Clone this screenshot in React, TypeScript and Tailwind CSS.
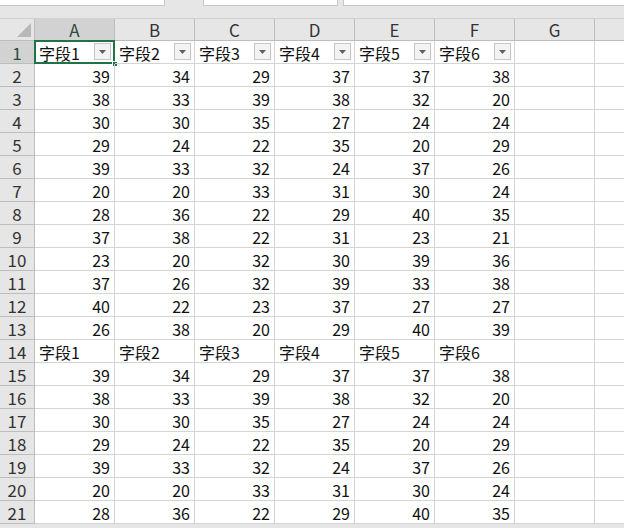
import React from 'react'

const cols = ['A', 'B', 'C', 'D', 'E', 'F', 'G']
const fields = ['字段1', '字段2', '字段3', '字段4', '字段5', '字段6']

const block = [
  [39, 34, 29, 37, 37, 38],
  [38, 33, 39, 38, 32, 20],
  [30, 30, 35, 27, 24, 24],
  [29, 24, 22, 35, 20, 29],
  [39, 33, 32, 24, 37, 26],
  [20, 20, 33, 31, 30, 24],
  [28, 36, 22, 29, 40, 35],
  [37, 38, 22, 31, 23, 21],
  [23, 20, 32, 30, 39, 36],
  [37, 26, 32, 39, 33, 38],
  [40, 22, 23, 37, 27, 27],
  [26, 38, 20, 29, 40, 39],
]

type Row = { kind: 'filter' | 'head' | 'data'; values?: number[] }

const rows: Row[] = [
  { kind: 'filter' },
  ...block.map((values) => ({ kind: 'data' as const, values })),
  { kind: 'head' },
  ...block.slice(0, 7).map((values) => ({ kind: 'data' as const, values })),
]

const font = { fontFamily: '"Noto Sans CJK SC", "Noto Sans", sans-serif' }

function FilterButton() {
  return (
    <span className="absolute right-[3px] top-[2px] flex h-[17px] w-[17px] items-center justify-center border border-[#c6c6c6] bg-[#f3f3f3]">
      <svg width="7" height="4" viewBox="0 0 7 4">
        <path d="M0 0h7L3.5 4z" fill="#606060" />
      </svg>
    </span>
  )
}

export default function App() {
  return (
    <div className="h-[528px] w-[624px] overflow-hidden bg-[#e6e6e6] text-[#111]" style={font}>
      {/* formula bar strip */}
      <div className="flex h-[19px] items-start border-b border-[#d0d0d0]">
        <div className="h-[6px] w-[165px] border-b border-r border-[#c8c8c8] bg-white" />
        <div className="ml-[38px] h-[6px] w-[135px] border-x border-b border-[#c8c8c8] bg-white" />
        <div className="ml-[5px] h-[6px] flex-1 border-b border-l border-[#c8c8c8] bg-white" />
      </div>

      <div className="grid grid-cols-[35px_repeat(7,80px)_1fr] bg-white">
        {/* column headers */}
        <div className="flex h-[22px] items-end justify-end border-b border-r border-[#bdbdbd] bg-[#e6e6e6] p-[3px]">
          <svg width="14" height="14" viewBox="0 0 14 14">
            <path d="M14 0v14H0z" fill="#b8b8b8" />
          </svg>
        </div>
        {cols.map((c, i) => (
          <div
            key={c}
            className={`flex h-[22px] items-center justify-center border-b border-r border-[#bdbdbd] text-[17px] ${
              i === 0 ? 'bg-[#d2d2d2] text-[#2e4a3a]' : 'bg-[#e6e6e6] text-[#333]'
            }`}
          >
            {c}
          </div>
        ))}
        <div className="h-[22px] border-b border-[#bdbdbd] bg-[#e6e6e6]" />

        {rows.map((row, r) => (
          <React.Fragment key={r}>
            <div
              className={`flex h-[23px] items-center justify-center border-b border-r border-[#bdbdbd] pt-[2px] text-[17px] ${
                r === 0 ? 'bg-[#d2d2d2] text-[#2e4a3a]' : 'bg-[#e6e6e6] text-[#333]'
              }`}
            >
              {r + 1}
            </div>
            {cols.map((c, i) => {
              const isField = i < 6 && row.kind !== 'data'
              return (
                <div
                  key={c}
                  className={`relative flex h-[23px] items-center border-b border-r border-[#d4d4d4] px-[4px] pt-[2px] text-[16px] ${
                    isField ? 'justify-start' : 'justify-end'
                  }`}
                >
                  {isField && fields[i]}
                  {row.kind === 'data' && i < 6 && row.values![i]}
                  {row.kind === 'filter' && i < 6 && <FilterButton />}
                  {r === 0 && i === 0 && (
                    <>
                      <span className="pointer-events-none absolute -left-px -top-px bottom-[-1px] right-[-1px] border-2 border-[#217346]" />
                      <span className="absolute bottom-[-4px] right-[-4px] h-[6px] w-[6px] border border-white bg-[#217346]" />
                    </>
                  )}
                </div>
              )
            })}
            <div className="h-[23px] border-b border-[#d4d4d4]" />
          </React.Fragment>
        ))}
      </div>
    </div>
  )
}
